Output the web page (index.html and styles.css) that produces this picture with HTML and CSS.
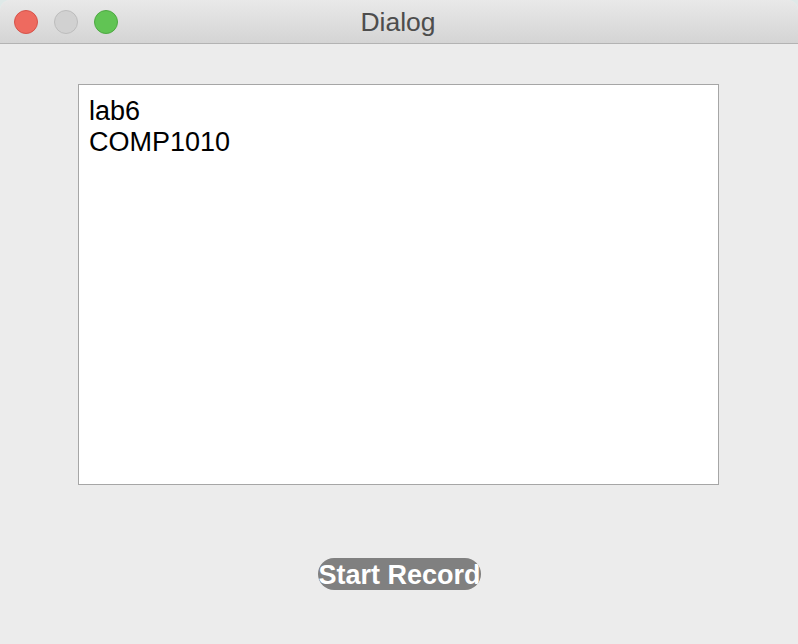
FILE: index.html
```html
<!DOCTYPE html>
<html>
<head>
<meta charset="utf-8">
<link rel="stylesheet" href="styles.css">
</head>
<body>
<div class="window">
  <div class="titlebar">
    <div class="lights">
      <span class="light red"></span>
      <span class="light gray"></span>
      <span class="light green"></span>
    </div>
    <div class="title">Dialog</div>
  </div>
  <div class="content">
    <div class="textbox">
      <div class="line">lab6</div>
      <div class="line">COMP1010</div>
    </div>
    <div class="actions">
      <button class="record"><span class="label">Start Record</span></button>
    </div>
  </div>
</div>
</body>
</html>
```
FILE: styles.css
```css
html, body {
  margin: 0;
  padding: 0;
  width: 798px;
  height: 644px;
  overflow: hidden;
  background: #dfe9e8;
  font-family: "Liberation Sans", Arial, sans-serif;
}
.window {
  width: 798px;
  height: 644px;
  background: #ececec;
  border-radius: 10px 10px 0 0;
  overflow: hidden;
  display: flex;
  flex-direction: column;
}
.titlebar {
  position: relative;
  height: 43px;
  flex: none;
  background: linear-gradient(#e9e9e9, #d4d4d4);
  border-bottom: 1px solid #b3b3b3;
  display: flex;
  align-items: center;
  justify-content: center;
}
.lights {
  position: absolute;
  left: 14px;
  top: 10px;
  display: flex;
  gap: 16px;
}
.light {
  width: 24px;
  height: 24px;
  border-radius: 50%;
  box-sizing: border-box;
}
.red { background: #ee6a5f; border: 1px solid #d5534a; }
.gray { background: #d1d1d1; border: 1px solid #bcbcbc; }
.green { background: #61c454; border: 1px solid #4ea843; }
.title {
  font-size: 26.5px;
  color: #4d4d4d;
  margin-top: 1px;
  margin-left: -2px;
}
.content {
  flex: 1;
  display: flex;
  flex-direction: column;
  padding: 40px 0 0 78px;
}
.textbox {
  background: #fff;
  border: 1px solid #a6a6a6;
  padding: 11px 10px;
  box-sizing: border-box;
  width: 641px;
  height: 401px;
  color: #000;
  font-size: 27px;
  line-height: 31px;
}
.actions {
  padding-left: 240px;
  padding-top: 73px;
}
.record {
  width: 163px;
  height: 32px;
  border: none;
  border-radius: 16px;
  background: #808080;
  color: #fff;
  font-family: "Liberation Sans", Arial, sans-serif;
  font-weight: bold;
  font-size: 27px;
  padding: 2px 0 0 0;
  box-sizing: border-box;
  line-height: 30px;
  white-space: nowrap;
  overflow: hidden;
  display: flex;
  justify-content: center;
  align-items: center;
}
```
